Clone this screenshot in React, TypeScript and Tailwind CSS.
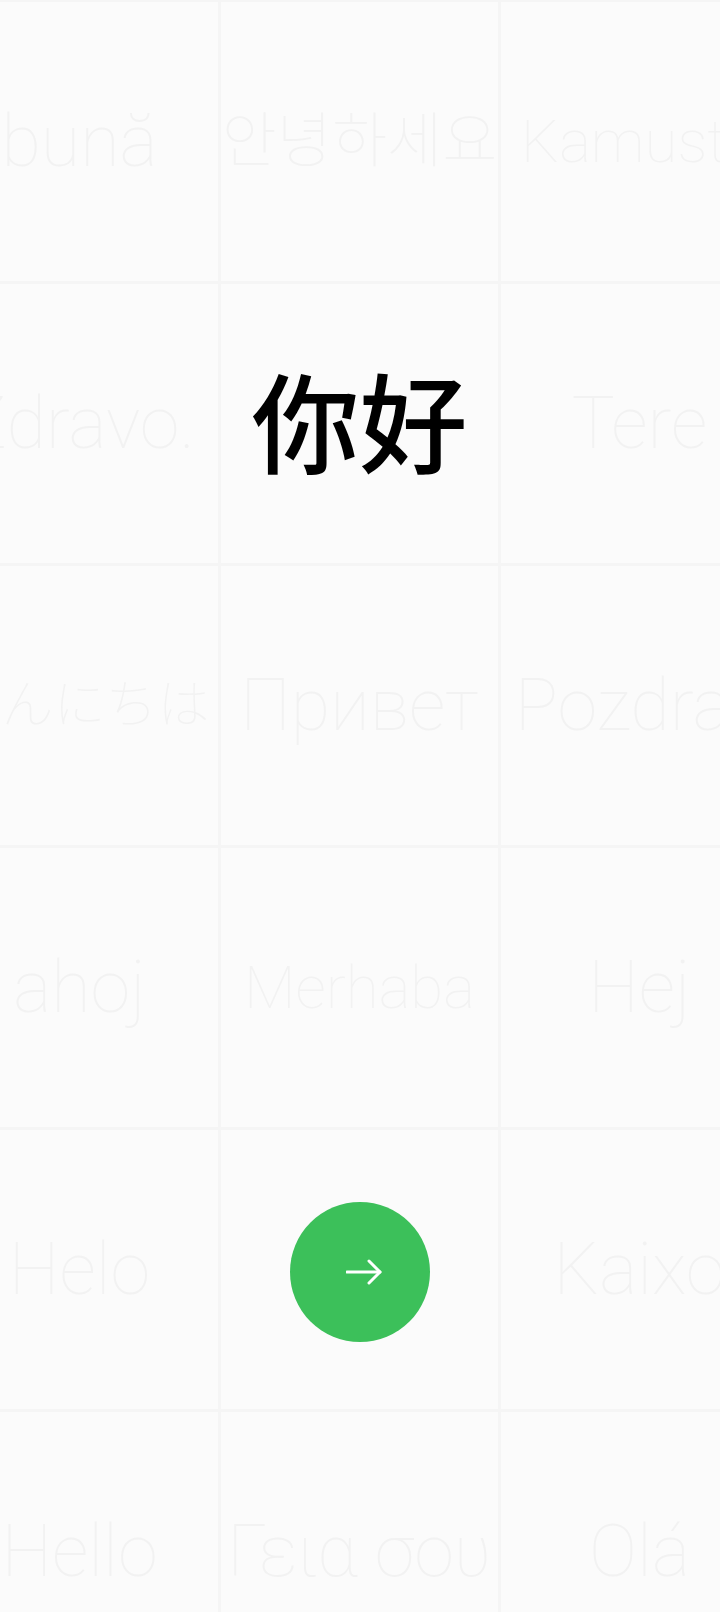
const cells = [
  { text: "bună", size: "text-[72px]" },
  { text: "안녕하세요", size: "text-[60px]" },
  { text: "Kamusta", size: "text-[60px]" },
  { text: "Zdravo.", size: "text-[72px]" },
  { text: "你好", size: "text-[108px] pt-2" },
  { text: "Tere", size: "text-[72px]" },
  { text: "こんにちは", size: "text-[52px]" },
  { text: "Привет", size: "text-[72px]" },
  { text: "Pozdrav", size: "text-[72px]" },
  { text: "ahoj", size: "text-[72px]" },
  { text: "Merhaba", size: "text-[60px]" },
  { text: "Hej", size: "text-[72px]" },
  { text: "Helo", size: "text-[72px]" },
  { text: "", size: "" },
  { text: "Kaixo", size: "text-[72px]" },
  { text: "Hello", size: "text-[72px]" },
  { text: "Γεια σου", size: "text-[72px]" },
  { text: "Olá", size: "text-[72px]" },
]

export default function App() {
  return (
    <div className="h-[1612px] w-[720px] overflow-hidden bg-[#fbfbfb] font-['Roboto','Noto_Sans_CJK_SC',sans-serif]">
      <div className="ml-[-62px] mt-[-1px] grid w-[840px] grid-cols-3 auto-rows-[282px]">
        {cells.map((cell, i) => (
          <div
            key={i}
            className="flex items-center justify-center overflow-hidden border-l-[3px] border-t-[3px] border-[#f5f5f5] pt-px"
          >
            {cell.text ? (
              <span className={`whitespace-nowrap ${i === 4 ? "font-medium text-black" : "font-thin text-[#f2f2f2]"} ${cell.size}`}>
                {cell.text}
              </span>
            ) : (
              <button className="mt-1 flex h-[140px] w-[140px] items-center justify-center rounded-full bg-[#3cc05a]">
                <svg width="36" height="26" viewBox="0 0 36 26" fill="none" stroke="#fff" strokeWidth="3" strokeLinecap="round" strokeLinejoin="round" className="ml-2">
                  <path d="M1 13h33" />
                  <path d="M23 2l11 11-11 11" />
                </svg>
              </button>
            )}
          </div>
        ))}
      </div>
    </div>
  )
}
